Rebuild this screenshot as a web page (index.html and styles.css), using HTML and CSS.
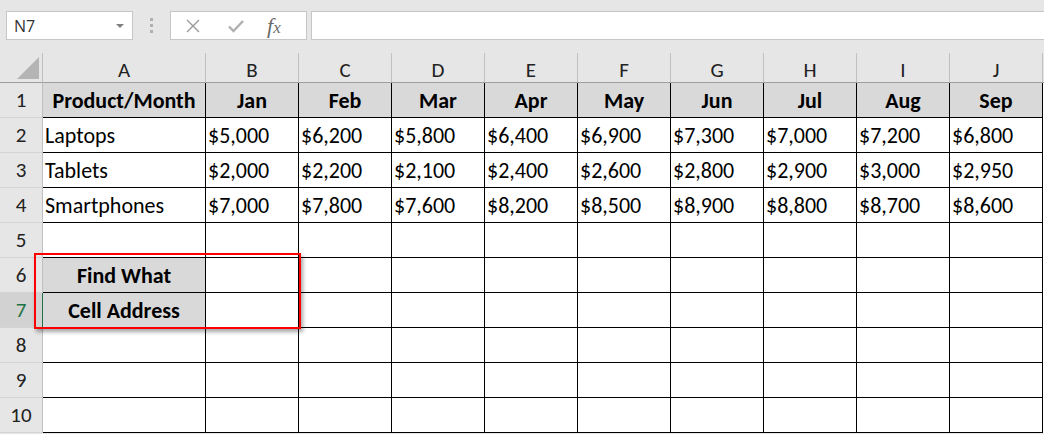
FILE: index.html
```html
<!DOCTYPE html>
<html lang="en">
<head>
  <meta charset="UTF-8">
  <title>Find Cell Address</title>
  <link rel="stylesheet" href="styles.css">
</head>
<body>

  <!-- Barra de fórmulas -->
  <div class="formula-bar">
    <div class="name-box">
      <span>N7</span>
      <span class="drop"></span>
    </div>
    <div class="grip"><i></i><i></i><i></i></div>
    <div class="fx-buttons">
      <svg class="ico" width="16" height="14" viewBox="0 0 16 14"><path d="M2 1 L14 13 M14 1 L2 13" stroke="#9a9a9a" stroke-width="1.4" fill="none"/></svg>
      <svg class="ico" width="18" height="14" viewBox="0 0 18 14"><path d="M2 7.5 L6.5 12 L16 2" stroke="#b0b0b0" stroke-width="2.4" fill="none"/></svg>
      <span class="fx">f<small>x</small></span>
    </div>
    <div class="formula-input"></div>
  </div>

  <!-- Hoja -->
  <div class="sheet">
    <div class="row head">
      <div class="corner"><span class="tri"></span></div>
      <div class="ch">A</div><div class="ch">B</div><div class="ch">C</div><div class="ch">D</div><div class="ch">E</div>
      <div class="ch">F</div><div class="ch">G</div><div class="ch">H</div><div class="ch">I</div><div class="ch">J</div>
      <div class="ch last"></div>
    </div>

    <div class="row">
      <div class="rh">1</div>
      <div class="c hd">Product/Month</div><div class="c hd">Jan</div><div class="c hd">Feb</div><div class="c hd">Mar</div><div class="c hd">Apr</div>
      <div class="c hd">May</div><div class="c hd">Jun</div><div class="c hd">Jul</div><div class="c hd">Aug</div><div class="c hd">Sep</div>
      <div class="c last"></div>
    </div>

    <div class="row">
      <div class="rh">2</div>
      <div class="c">Laptops</div><div class="c">$5,000</div><div class="c">$6,200</div><div class="c">$5,800</div><div class="c">$6,400</div>
      <div class="c">$6,900</div><div class="c">$7,300</div><div class="c">$7,000</div><div class="c">$7,200</div><div class="c">$6,800</div>
      <div class="c last"></div>
    </div>

    <div class="row">
      <div class="rh">3</div>
      <div class="c">Tablets</div><div class="c">$2,000</div><div class="c">$2,200</div><div class="c">$2,100</div><div class="c">$2,400</div>
      <div class="c">$2,600</div><div class="c">$2,800</div><div class="c">$2,900</div><div class="c">$3,000</div><div class="c">$2,950</div>
      <div class="c last"></div>
    </div>

    <div class="row">
      <div class="rh">4</div>
      <div class="c">Smartphones</div><div class="c">$7,000</div><div class="c">$7,800</div><div class="c">$7,600</div><div class="c">$8,200</div>
      <div class="c">$8,500</div><div class="c">$8,900</div><div class="c">$8,800</div><div class="c">$8,700</div><div class="c">$8,600</div>
      <div class="c last"></div>
    </div>

    <div class="row">
      <div class="rh">5</div>
      <div class="c"></div><div class="c"></div><div class="c"></div><div class="c"></div><div class="c"></div>
      <div class="c"></div><div class="c"></div><div class="c"></div><div class="c"></div><div class="c"></div>
      <div class="c last"></div>
    </div>

    <div class="row">
      <div class="rh">6</div>
      <div class="c hd">Find What</div><div class="c"></div><div class="c"></div><div class="c"></div><div class="c"></div>
      <div class="c"></div><div class="c"></div><div class="c"></div><div class="c"></div><div class="c"></div>
      <div class="c last"></div>
    </div>

    <div class="row">
      <div class="rh sel">7</div>
      <div class="c hd">Cell Address</div><div class="c"></div><div class="c"></div><div class="c"></div><div class="c"></div>
      <div class="c"></div><div class="c"></div><div class="c"></div><div class="c"></div><div class="c"></div>
      <div class="c last"></div>
    </div>

    <div class="row">
      <div class="rh">8</div>
      <div class="c"></div><div class="c"></div><div class="c"></div><div class="c"></div><div class="c"></div>
      <div class="c"></div><div class="c"></div><div class="c"></div><div class="c"></div><div class="c"></div>
      <div class="c last"></div>
    </div>

    <div class="row">
      <div class="rh">9</div>
      <div class="c"></div><div class="c"></div><div class="c"></div><div class="c"></div><div class="c"></div>
      <div class="c"></div><div class="c"></div><div class="c"></div><div class="c"></div><div class="c"></div>
      <div class="c last"></div>
    </div>

    <div class="row">
      <div class="rh">10</div>
      <div class="c"></div><div class="c"></div><div class="c"></div><div class="c"></div><div class="c"></div>
      <div class="c"></div><div class="c"></div><div class="c"></div><div class="c"></div><div class="c"></div>
      <div class="c last"></div>
    </div>

    <!-- Marco rojo -->
    <div class="highlight"></div>
  </div>

</body>
</html>
```

FILE: styles.css
```css
html, body {
  margin: 0;
  padding: 0;
  height: 100%;
  background: #e6e6e6;
  overflow: hidden;
  font-family: 'Carlito', 'Lato', sans-serif;
}

/* Barra de fórmulas */
.formula-bar {
  display: flex;
  align-items: center;
  height: 29px;
  padding: 11px 0 0 6px;
}

.name-box {
  box-sizing: border-box;
  width: 127px;
  height: 29px;
  background: #fff;
  border: 1px solid #c6c6c6;
  display: flex;
  align-items: center;
  justify-content: space-between;
  padding: 0 8px 0 7px;
  font-family: 'Open Sans', sans-serif;
  font-size: 16px;
  color: #333;
}

.drop {
  width: 0;
  height: 0;
  border-left: 4px solid transparent;
  border-right: 4px solid transparent;
  border-top: 4px solid #808080;
}

.grip {
  width: 37px;
  display: flex;
  flex-direction: column;
  align-items: center;
  gap: 3px;
}

.grip i {
  width: 3px;
  height: 3px;
  background: #b0b0b0;
}

.fx-buttons {
  box-sizing: border-box;
  width: 137px;
  height: 29px;
  background: #fff;
  border: 1px solid #c6c6c6;
  display: flex;
  align-items: center;
  padding-left: 14px;
  gap: 26px;
}

.fx {
  font-family: 'Liberation Serif', serif;
  font-style: italic;
  font-size: 22px;
  color: #6a6a6a;
  margin-left: -4px;
}

.fx small {
  font-size: 17px;
}

.formula-input {
  flex: 1;
  box-sizing: border-box;
  height: 29px;
  margin-left: 4px;
  background: #fff;
  border: 1px solid #c6c6c6;
  border-right: none;
}

/* Hoja */
.sheet {
  position: relative;
  margin-top: 13px;
}

.row {
  display: grid;
  grid-template-columns: 43px 163px repeat(9, 93px) 1fr;
  height: 35px;
}

.row.head {
  height: 30px;
}

.row > div {
  box-sizing: border-box;
  display: flex;
  align-items: center;
  font-size: 22px;
  white-space: nowrap;
  overflow: hidden;
}

.corner {
  border-right: 1px solid #bfbfbf;
  border-bottom: 1px solid #9e9e9e;
  position: relative;
}

.tri {
  position: absolute;
  left: 17px;
  bottom: 3px;
  width: 0;
  height: 0;
  border-left: 22px solid transparent;
  border-bottom: 22px solid #b4b4b4;
}

.row > .ch {
  justify-content: center;
  color: #222;
  font-size: 21px;
  border-right: 1px solid #c0c0c0;
  border-bottom: 1px solid #9e9e9e;
  padding-top: 4px;
}

.ch.last {
  border-right: none;
}

.row > .rh {
  justify-content: center;
  color: #222;
  font-size: 21px;
  background: #e6e6e6;
  border-right: 1px solid #bfbfbf;
  border-bottom: 1px solid #d4d4d4;
}

.rh.sel {
  background: #d2d2d2;
  color: #217346;
  border-right: 1px solid #217346;
}

.c {
  background: #fff;
  color: #000;
  padding-left: 2px;
  border-right: 1px solid #000;
  border-bottom: 1px solid #000;
}

.c.last {
  border: none;
  background: #fff;
}

.c.hd {
  background: #d9d9d9;
  font-weight: bold;
  justify-content: center;
  padding-left: 0;
}

.highlight {
  position: absolute;
  left: 34px;
  top: 200px;
  width: 263px;
  height: 72px;
  border: 2px solid #f00;
  box-shadow: 2px 3px 4px rgba(0, 0, 0, 0.35);
  pointer-events: none;
}
```
